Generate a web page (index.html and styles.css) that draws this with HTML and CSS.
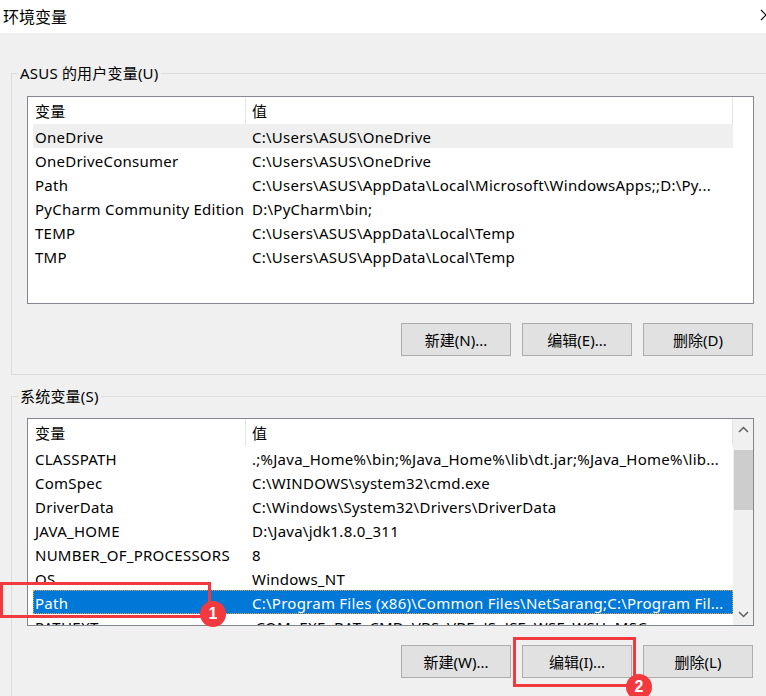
FILE: index.html
```html
<!DOCTYPE html>
<html>
<head>
  <meta charset="utf-8">
  <title>环境变量</title>
  <link rel="stylesheet" href="styles.css">
</head>
<body>
  <div class="titlebar">
    <span class="title">环境变量</span>
    <svg class="close" width="12" height="12" viewBox="0 0 12 12">
      <path d="M1 1 L11 11 M11 1 L1 11" stroke="#000" stroke-width="1.1" fill="none"/>
    </svg>
  </div>

  <div class="dialog">
    <div class="group group-user">
      <div class="legend">ASUS 的用户变量(U)</div>
      <div class="listview">
        <div class="list-body">
          <div class="row head"><span class="cell name">变量</span><span class="cell value">值</span></div>
          <div class="row hover"><span class="cell name">OneDrive</span><span class="cell value">C:\Users\ASUS\OneDrive</span></div>
          <div class="row"><span class="cell name">OneDriveConsumer</span><span class="cell value">C:\Users\ASUS\OneDrive</span></div>
          <div class="row"><span class="cell name">Path</span><span class="cell value">C:\Users\ASUS\AppData\Local\Microsoft\WindowsApps;;D:\Py...</span></div>
          <div class="row"><span class="cell name">PyCharm Community Edition</span><span class="cell value">D:\PyCharm\bin;</span></div>
          <div class="row"><span class="cell name">TEMP</span><span class="cell value">C:\Users\ASUS\AppData\Local\Temp</span></div>
          <div class="row"><span class="cell name">TMP</span><span class="cell value">C:\Users\ASUS\AppData\Local\Temp</span></div>
        </div>
      </div>
      <div class="buttons">
        <button class="btn">新建(N)...</button>
        <button class="btn">编辑(E)...</button>
        <button class="btn">删除(D)</button>
      </div>
    </div>

    <div class="group group-system">
      <div class="legend">系统变量(S)</div>
      <div class="listview">
        <div class="list-body">
          <div class="row head"><span class="cell name">变量</span><span class="cell value">值</span></div>
          <div class="row"><span class="cell name">CLASSPATH</span><span class="cell value">.;%Java_Home%\bin;%Java_Home%\lib\dt.jar;%Java_Home%\lib...</span></div>
          <div class="row"><span class="cell name">ComSpec</span><span class="cell value">C:\WINDOWS\system32\cmd.exe</span></div>
          <div class="row"><span class="cell name">DriverData</span><span class="cell value">C:\Windows\System32\Drivers\DriverData</span></div>
          <div class="row"><span class="cell name">JAVA_HOME</span><span class="cell value">D:\Java\jdk1.8.0_311</span></div>
          <div class="row"><span class="cell name">NUMBER_OF_PROCESSORS</span><span class="cell value">8</span></div>
          <div class="row"><span class="cell name">OS</span><span class="cell value">Windows_NT</span></div>
          <div class="row selected"><span class="cell name">Path</span><span class="cell value">C:\Program Files (x86)\Common Files\NetSarang;C:\Program Fil...</span></div>
          <div class="row"><span class="cell name">PATHEXT</span><span class="cell value">.COM;.EXE;.BAT;.CMD;.VBS;.VBE;.JS;.JSE;.WSF;.WSH;.MSC</span></div>
        </div>
        <div class="scrollbar">
          <div class="sb-arrow">
            <svg width="11" height="7" viewBox="0 0 11 7"><path d="M1 6 L5.5 1.5 L10 6" stroke="#606060" stroke-width="1.5" fill="none"/></svg>
          </div>
          <div class="sb-track"><div class="sb-thumb"></div></div>
          <div class="sb-arrow">
            <svg width="11" height="7" viewBox="0 0 11 7"><path d="M1 1 L5.5 5.5 L10 1" stroke="#606060" stroke-width="1.5" fill="none"/></svg>
          </div>
        </div>
      </div>
      <div class="buttons">
        <button class="btn">新建(W)...</button>
        <button class="btn">编辑(I)...</button>
        <button class="btn">删除(L)</button>
      </div>
    </div>
  </div>

  <!-- annotation marks drawn over the dialog -->
  <div class="mark mark-path"></div>
  <div class="badge badge-path">1</div>
  <div class="mark mark-edit"></div>
  <div class="badge badge-edit">2</div>
</body>
</html>
```

FILE: styles.css
```css
body {
  margin: 0;
  width: 766px;
  height: 696px;
  overflow: hidden;
  position: relative;
  background-color: #f0f0f0;
  color: #000000;
  font-family: "Noto Sans", "Noto Sans CJK SC", sans-serif;
  font-size: 15px;
}

.titlebar {
  height: 33px;
  background: #ffffff;
  display: flex;
  align-items: center;
  justify-content: space-between;
  padding-left: 3px;
  overflow: hidden;
}

.title {
  font-size: 16px;
  margin-top: -2px;
}

.close {
  margin-right: -6px;
  margin-top: -4px;
}

.dialog {
  padding-left: 11px;
}

.group {
  border: 1px solid #dcdcdc;
  padding: 0 51px 18px 15px;
  margin-right: -40px;
}

.group-user {
  margin-top: 40px;
}

.group-system {
  margin-top: 21px;
}

.legend {
  width: max-content;
  line-height: 20px;
  margin: -11px 0 13px -9px;
  padding: 0 2px;
  background: #f0f0f0;
  letter-spacing: 0.2px;
}

.group-system .legend {
  margin-bottom: 12px;
}

.listview {
  height: 208px;
  box-sizing: border-box;
  border: 1px solid #828790;
  background: #ffffff;
  padding-left: 5px;
  display: flex;
  overflow: hidden;
}

.list-body {
  width: 700px;
  flex: 0 0 700px;
}

.row {
  display: grid;
  grid-template-columns: 213px 487px;
  height: 24px;
  line-height: 24px;
  white-space: nowrap;
  letter-spacing: 0.25px;
}

.row.head {
  height: 27px;
  line-height: 27px;
}

.row.head .cell {
  border-right: 1px solid #e5e5e5;
}

.cell {
  overflow: hidden;
  padding-top: 1px;
  box-sizing: border-box;
}

.row.head .cell {
  padding-top: 1px;
}

.cell.name {
  padding-left: 2px;
}

.cell.value {
  padding-left: 6px;
}

.row.hover {
  background: #efefef;
}

.row.selected {
  background: #0078d7;
  color: #ffffff;
  outline: 1px dotted #e0a050;
  outline-offset: -1px;
}

.scrollbar {
  width: 21px;
  flex: 0 0 21px;
  background: #f0f0f0;
  display: flex;
  flex-direction: column;
}

.sb-arrow {
  height: 21px;
  display: flex;
  align-items: center;
  justify-content: center;
}

.sb-track {
  flex: 1;
  padding: 10px 1px 0 1px;
}

.sb-thumb {
  height: 60px;
  background: #cdcdcd;
}

.buttons {
  display: flex;
  justify-content: flex-end;
  gap: 11px;
  margin-top: 19px;
  margin-right: 1px;
}

.btn {
  width: 110px;
  height: 33px;
  background: #e1e1e1;
  border: 1px solid #adadad;
  font-family: "Noto Sans", "Noto Sans CJK SC", sans-serif;
  font-size: 15px;
  color: #000000;
  padding: 0;
}

/* red annotation overlay */
.mark {
  position: absolute;
  border: 3px solid #f2393d;
  box-sizing: border-box;
}

.mark-path {
  left: 0;
  top: 582px;
  width: 211px;
  height: 36px;
}

.mark-edit {
  left: 513px;
  top: 637px;
  width: 123px;
  height: 50px;
}

.badge {
  position: absolute;
  width: 26px;
  height: 26px;
  border-radius: 50%;
  background: #f2393d;
  color: #ffffff;
  font-family: "Liberation Sans", sans-serif;
  font-weight: bold;
  font-size: 16px;
  line-height: 26px;
  text-align: center;
}

.badge-path {
  left: 200px;
  top: 601px;
}

.badge-edit {
  left: 626px;
  top: 674px;
}
```
